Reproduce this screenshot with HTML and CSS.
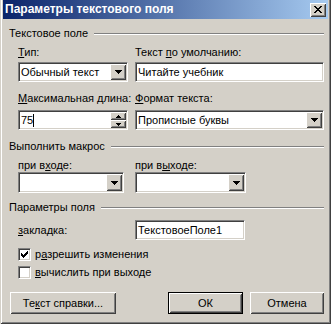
FILE: index.html
```html
<!DOCTYPE html>
<html>
<head>
  <title>Параметры текстового поля</title>
  <link rel="stylesheet" href="styles.css">
</head>
<body>
  <div class="window">
    <!-- Title bar -->
    <div class="titlebar">
      <span class="title">Параметры текстового поля</span>
      <span class="close">
        <svg width="8" height="7" viewBox="0 0 8 7" shape-rendering="crispEdges"><path d="M0 0h2v1h-2z M6 0h2v1h-2z M1 1h2v1h-2z M5 1h2v1h-2z M2 2h4v1h-4z M3 3h2v1h-2z M2 4h4v1h-4z M1 5h2v1h-2z M5 5h2v1h-2z M0 6h2v1h-2z M6 6h2v1h-2z" fill="#000"/></svg>
      </span>
    </div>

    <div class="content">
      <!-- Text field group -->
      <div class="group-head"><span>Текстовое поле</span><span class="rule"></span></div>
      <div class="cols labels">
        <span><u>Т</u>ип:</span>
        <span>Текст <u>п</u>о умолчанию:</span>
      </div>
      <div class="cols fields">
        <div class="box combo">
          <span class="value">Обычный текст</span>
          <span class="drop"><svg width="7" height="4" viewBox="0 0 7 4" shape-rendering="crispEdges"><path d="M0 0h7v1h-7z M1 1h5v1h-5z M2 2h3v1h-3z M3 3h1v1h-1z" fill="#000"/></svg></span>
        </div>
        <div class="box"><span class="value">Читайте учебник</span></div>
      </div>
      <div class="cols labels gap-big">
        <span><u>М</u>аксимальная длина:</span>
        <span><u>Ф</u>ормат текста:</span>
      </div>
      <div class="cols fields fields-2">
        <div class="box combo">
          <span class="value">75<span class="caret"></span></span>
          <span class="spin">
            <span class="spin-btn"><svg width="5" height="3" viewBox="0 0 5 3" shape-rendering="crispEdges"><path d="M2 0h1v1h-1z M1 1h3v1h-3z M0 2h5v1h-5z" fill="#000"/></svg></span>
            <span class="spin-btn"><svg width="5" height="3" viewBox="0 0 5 3" shape-rendering="crispEdges"><path d="M0 0h5v1h-5z M1 1h3v1h-3z M2 2h1v1h-1z" fill="#000"/></svg></span>
          </span>
        </div>
        <div class="box combo">
          <span class="value">Прописные буквы</span>
          <span class="drop"><svg width="7" height="4" viewBox="0 0 7 4" shape-rendering="crispEdges"><path d="M0 0h7v1h-7z M1 1h5v1h-5z M2 2h3v1h-3z M3 3h1v1h-1z" fill="#000"/></svg></span>
        </div>
      </div>

      <!-- Macro group -->
      <div class="group-head gap-big"><span>Выполнить макрос</span><span class="rule"></span></div>
      <div class="cols labels">
        <span>при в<u>х</u>оде:</span>
        <span>при в<u>ы</u>ходе:</span>
      </div>
      <div class="cols macros">
        <div class="box combo macro-left">
          <span class="value"></span>
          <span class="drop"><svg width="7" height="4" viewBox="0 0 7 4" shape-rendering="crispEdges"><path d="M0 0h7v1h-7z M1 1h5v1h-5z M2 2h3v1h-3z M3 3h1v1h-1z" fill="#000"/></svg></span>
        </div>
        <div class="box combo macro-right">
          <span class="value"></span>
          <span class="drop"><svg width="7" height="4" viewBox="0 0 7 4" shape-rendering="crispEdges"><path d="M0 0h7v1h-7z M1 1h5v1h-5z M2 2h3v1h-3z M3 3h1v1h-1z" fill="#000"/></svg></span>
        </div>
      </div>

      <!-- Field options group -->
      <div class="group-head gap-mid"><span>Параметры поля</span><span class="rule"></span></div>
      <div class="cols bookmark">
        <span><u>з</u>акладка:</span>
        <div class="box bookmark-box"><span class="value">ТекстовоеПоле1</span></div>
      </div>
      <div class="check first">
        <span class="checkbox"><svg width="7" height="7" viewBox="0 0 7 7" shape-rendering="crispEdges"><path d="M6 0h1v1h-1z M5 1h2v1h-2z M0 2h1v1h-1z M4 2h3v1h-3z M0 3h2v1h-2z M3 3h3v1h-3z M0 4h5v1h-5z M1 5h3v1h-3z M2 6h1v1h-1z" fill="#000"/></svg></span>
        <span>р<u>а</u>зрешить изменения</span>
      </div>
      <div class="check">
        <span class="checkbox"></span>
        <span><u>в</u>ычислить при выходе</span>
      </div>

      <!-- Buttons -->
      <div class="buttons">
        <span class="btn help">Те<u>к</u>ст справки...</span>
        <div class="btn-pair">
          <span class="btn default">ОК</span>
          <span class="btn">Отмена</span>
        </div>
      </div>
    </div>
  </div>
</body>
</html>
```

FILE: styles.css
```css
body {
  margin: 0;
  background-color: #fff;
  font-family: "Liberation Sans", Arial, sans-serif;
  font-size: 11px;
  line-height: 13px;
  color: #000;
}

u {
  text-underline-offset: 1px;
}

.window {
  width: 331px;
  box-sizing: border-box;
  padding: 0 3px 3px 3px;
  background-color: #d4d0c8;
  box-shadow: inset 1px 0 #d4d0c8, inset -1px -1px #404040, inset 2px 0 #fff, inset -2px -2px #808080;
}

.titlebar {
  height: 19px;
  display: flex;
  align-items: center;
  justify-content: space-between;
  padding: 0 2px 0 2px;
  background: linear-gradient(to right, #0a246a, #a6caf0);
}

.title {
  color: #fff;
  font-weight: bold;
  font-size: 12px;
  white-space: nowrap;
}

.close {
  width: 16px;
  height: 14px;
  display: flex;
  align-items: center;
  justify-content: center;
  background-color: #d4d0c8;
  box-shadow: inset 1px 1px #fff, inset -1px -1px #404040, inset 2px 2px #d4d0c8, inset -2px -2px #808080;
}

.close svg {
  margin-left: -1px;
}

.content {
  padding: 8px 4px 7px 6px;
}

.group-head {
  display: flex;
  align-items: center;
  height: 13px;
  white-space: nowrap;
}

.group-head .rule {
  flex: 1;
  height: 1px;
  margin-left: 6px;
  border-top: 1px solid #808080;
  border-bottom: 1px solid #fff;
  height: 0;
}

.gap-big {
  margin-top: 10px;
}

.gap-mid {
  margin-top: 8px;
}

.cols {
  display: grid;
  grid-template-columns: 110px 189px;
  column-gap: 7px;
  padding-left: 9px;
}

.labels {
  margin-top: 6px;
  white-space: nowrap;
}

.labels.gap-big {
  margin-top: 10px;
}

.fields {
  margin-top: 3px;
  height: 20px;
}

.fields-2 {
  margin-top: 5px;
}

.box {
  box-sizing: border-box;
  height: 20px;
  display: flex;
  align-items: stretch;
  padding: 1px;
  background-color: #fff;
  border: 1px solid;
  border-color: #808080 #fff #fff #808080;
  box-shadow: inset 1px 1px #404040, inset -1px -1px #d4d0c8;
}

.box .value {
  flex: 1;
  display: flex;
  align-items: center;
  padding-left: 1px;
  white-space: nowrap;
  overflow: hidden;
}

.caret {
  display: inline-block;
  width: 1px;
  height: 13px;
  background-color: #000;
}

.drop,
.spin-btn {
  background-color: #d4d0c8;
  display: flex;
  align-items: center;
  justify-content: center;
  box-shadow: inset 1px 1px #fff, inset -1px -1px #404040, inset 2px 2px #d4d0c8, inset -2px -2px #808080;
}

.drop {
  width: 16px;
}

.spin {
  width: 16px;
  display: flex;
  flex-direction: column;
}

.spin-btn {
  flex: 1;
}

.macros {
  margin-top: 0;
}

.macros .box {
  height: 21px;
}

.macro-left {
  width: 106px;
}

.macro-right {
  width: 111px;
}

.bookmark {
  margin-top: 6px;
  align-items: center;
}

.bookmark-box {
  width: 110px;
}

.check {
  display: flex;
  align-items: center;
  gap: 4px;
  padding-left: 9px;
  height: 13px;
  margin-top: 5px;
  white-space: nowrap;
}

.check.first {
  margin-top: 8px;
}

.checkbox {
  box-sizing: border-box;
  width: 13px;
  height: 13px;
  display: flex;
  align-items: center;
  justify-content: center;
  background-color: #fff;
  border: 1px solid;
  border-color: #808080 #fff #fff #808080;
  box-shadow: inset 1px 1px #404040, inset -1px -1px #d4d0c8;
}

.buttons {
  display: flex;
  justify-content: space-between;
  margin-top: 13px;
}

.btn-pair {
  display: flex;
  gap: 7px;
}

.btn {
  box-sizing: border-box;
  height: 22px;
  width: 74px;
  display: flex;
  align-items: center;
  justify-content: center;
  background-color: #d4d0c8;
  box-shadow: inset 1px 1px #fff, inset -1px -1px #404040, inset 2px 2px #d4d0c8, inset -2px -2px #808080;
  white-space: nowrap;
}

.btn.help {
  width: 106px;
  margin-left: 1px;
}

.btn.default {
  width: 75px;
  border: 1px solid #000;
}
```
